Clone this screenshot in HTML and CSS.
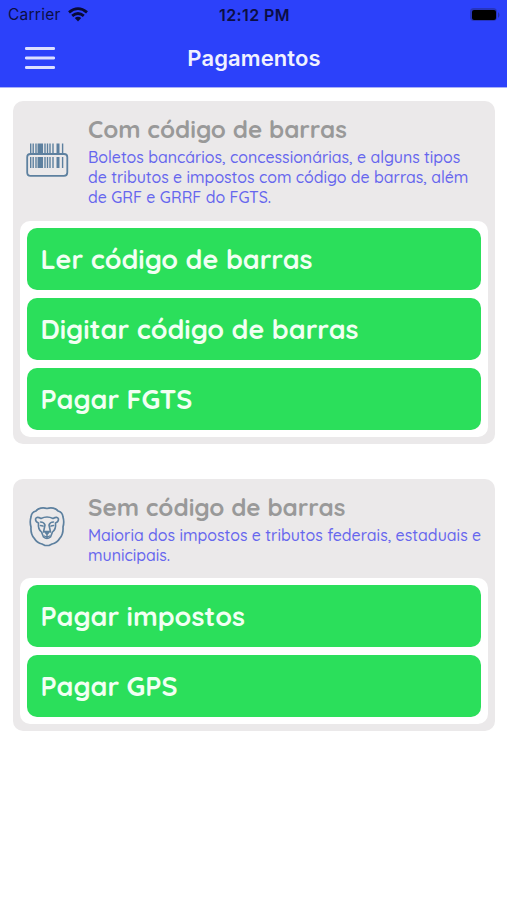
FILE: index.html
```html
<!DOCTYPE html>
<html lang="pt-BR">
<head>
<meta charset="utf-8">
<title>Pagamentos</title>
<link rel="stylesheet" href="styles.css">
</head>
<body>
<header class="topbar">
  <div class="status">
    <div class="carrier"><span>Carrier</span>
      <svg class="wifi" viewBox="0 0 20 15" width="20" height="15" fill="none" stroke="#080a36" stroke-width="2.8"><path d="M1 5.4Q10-2.1 19 5.4M4.2 8.9Q10 4 15.8 8.9"/><path d="M6.8 11.1Q10 8.5 13.2 11.1L10 14.4Z" fill="#080a36" stroke="none"/></svg>
    </div>
    <div class="clock">12:12 PM</div>
    <svg class="battery" viewBox="0 0 32 16" width="32" height="16"><rect x="1" y="1" width="27" height="13" rx="4" fill="#2735bd"/><rect x="3" y="3" width="24" height="10" rx="2" fill="#000"/><path d="M29 5q3 3 0 6z" fill="#2531a6"/></svg>
  </div>
  <div class="nav">
    <svg class="menu" viewBox="0 0 30 24" width="30" height="24" stroke="#dcdfff" stroke-width="2.8" stroke-linecap="round"><path d="M1.3 2.5h27.4M1.3 12h27.4M1.3 21.5h27.4"/></svg>
    <h1>Pagamentos</h1>
  </div>
</header>
<main>
  <section class="card">
    <div class="head">
      <svg class="icon" viewBox="0 0 44 44" width="44" height="44" fill="none" stroke="#5d809f"><g><path stroke-width="1.4" d="M5.7 6.5V16M5.7 20V31M8.2 6.5V16M8.2 20V31M11 6.5V16M11 20V31M20 6.5V16M20 20V31M22.5 6.5V16M22.5 20V31M25 6.5V16M25 20V31M28 6.5V16M28 20V31M37.600 6.5V16M37.600 20V31"/><path stroke-width="5.500" d="M15.3 6.5V16M15.3 20V31"/><path stroke-width="3" d="M33 6.5V16M33 20V31"/></g><path stroke-width="1.8" d="M5.500 17H39Q42.300 17 42.300 20V35.500Q42.300 38.800 39 38.800H5.500Q2.200 38.800 2.200 35.500V20Q2.200 17 5.500 17Z"/></svg>
      <div class="info">
        <h2>Com código de barras</h2>
        <p>Boletos bancários, concessionárias, e alguns tipos<br>de tributos e impostos com código de barras, além<br>de GRF e GRRF do FGTS.</p>
      </div>
    </div>
    <div class="actions">
      <button>Ler código de barras</button>
      <button>Digitar código de barras</button>
      <button>Pagar FGTS</button>
    </div>
  </section>
  <section class="card second">
    <div class="head">
      <svg class="icon" viewBox="0 0 44 44" width="44" height="44" fill="none" stroke="#5d809f" stroke-width="1.7" stroke-linecap="round" stroke-linejoin="round"><path d="M22 3.500C18 2 13 3 11 6Q6.500 7 6 12Q4.500 17 6 22Q5.500 29 9 33Q12 38 17 39L20 40.500H24L27 39Q32 38 35 33Q38.500 29 38 22Q39.500 17 38 12Q37.500 7 33 6C31 3 26 2 22 3.500Z"/><path stroke-width="1.600" d="M16 13.500Q11.500 11 10.500 14Q10.500 17 13.500 18C13 22 14 25 16.500 27L18.500 32Q22 35 25.500 32L27.500 27C30 25 31 22 30.500 18Q33.500 17 33.500 14Q32.500 11 28 13.500Q22 10.500 16 13.500ZM15.500 17Q19 17 20 20L18.500 27M28.500 17Q25 17 24 20L25.500 27M15.500 20.500L18 21M28.500 20.500L26 21"/><path d="M19.500 26.500H24.500L22 29.500ZM22 29.500V32M19.500 31L22 32.500L24.500 31" stroke-width="1.4" fill="#5d809f"/></svg>
      <div class="info">
        <h2>Sem código de barras</h2>
        <p>Maioria dos impostos e tributos federais, estaduais e<br>municipais.</p>
      </div>
    </div>
    <div class="actions">
      <button>Pagar impostos</button>
      <button>Pagar GPS</button>
    </div>
  </section>
</main>
</body>
</html>
```
FILE: styles.css
```css
* { box-sizing: border-box; margin: 0; padding: 0; }
body { background: #fff; font-family: Quicksand, Lato, sans-serif; }
.topbar { height: 88px; background: #2c41fa; border-bottom: 1px solid #a9b1f8; font-family: Inter, sans-serif; }
.status { height: 29px; display: grid; grid-template-columns: 1fr auto 1fr; align-items: center; padding: 0 6px 0 8px; color: #0b0e45; }
.carrier { display: flex; align-items: center; gap: 7px; font-size: 15.5px; letter-spacing: .25px; }
.clock { font-size: 16px; font-weight: 600; letter-spacing: .4px; }
.battery { justify-self: end; }
.nav { height: 57px; display: grid; grid-template-columns: 1fr auto 1fr; align-items: center; padding: 0 24px 0 25px; }
h1 { color: #f0f1ff; font-size: 22px; font-weight: 600; line-height: 28px; letter-spacing: .1px; }
main { padding: 13px 12px 0 13px; display: flex; flex-direction: column; gap: 35px; }
.card { background: #ebe9ea; border-radius: 10px; padding: 0 7px 7px; }
.head { height: 120px; display: grid; grid-template-columns: 68px 1fr; padding-top: 15px; }
.second .head { height: 99px; }
.icon { margin: 21px 0 0 5px; }
.second .icon { margin-top: 11px; }
h2 { color: #999; font-size: 24.2px; font-weight: 700; line-height: 26px; white-space: nowrap; }
p { color: #6666ee; font-size: 15.9px; font-weight: 500; line-height: 20px; padding-top: 5px; white-space: nowrap; }
.actions { background: #fff; border-radius: 10px; padding: 7px; display: grid; gap: 8px; }
button { height: 62px; border: 0; border-radius: 10px; background: #2bdf5b; color: #f2fff3; font: 700 26.9px/62px Quicksand, Lato, sans-serif; text-align: left; padding-left: 13.5px; white-space: nowrap; }
```
